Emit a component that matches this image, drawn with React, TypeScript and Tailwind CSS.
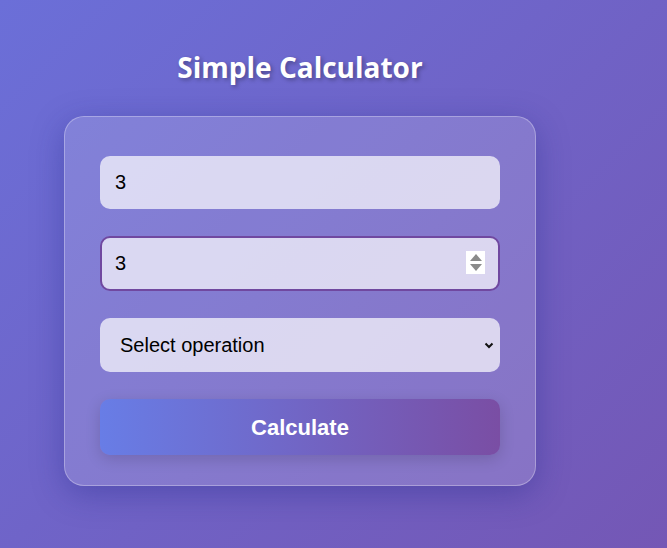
import { useState } from "react"

const App = () => {
  const [a, setA] = useState("3")
  const [b, setB] = useState("3")
  const [op, setOp] = useState("")

  return (
    <div className="min-h-screen w-full bg-[linear-gradient(135deg,#6b6fd8_0%,#7457b5_100%)] font-['Liberation_Sans',Arial,sans-serif]">
      <div className="w-[600px] flex flex-col items-center pt-[47px]">
        <h1 className="text-[28px] leading-[40px] font-bold text-white font-['Open_Sans',sans-serif] [text-shadow:2px_2px_4px_rgba(0,0,0,0.3)]">
          Simple Calculator
        </h1>

        <div className="mt-[29px] w-[472px] rounded-[20px] border border-white/30 bg-white/15 px-[35px] pt-[39px] pb-[30px] shadow-[0_8px_32px_rgba(31,38,135,0.37)]">
          <div className="flex flex-col gap-[27px]">
            <input
              type="text"
              value={a}
              onChange={(e) => setA(e.target.value)}
              className="h-[53px] w-full rounded-[10px] bg-white/70 px-[15px] text-[20px] text-black outline-none"
            />

            <div className="relative">
              <input
                type="text"
                value={b}
                onChange={(e) => setB(e.target.value)}
                className="h-[55px] w-full rounded-[10px] border-2 border-[#7048a0] bg-white/70 px-[13px] text-[20px] text-black outline-none"
              />
              <span className="absolute right-[15px] top-[15px] flex h-[23px] w-[19px] flex-col items-center justify-center gap-[3px] bg-white">
                <span className="h-0 w-0 border-x-[6px] border-b-[7px] border-x-transparent border-b-[#8a8a8a]" />
                <span className="h-0 w-0 border-x-[6px] border-t-[7px] border-x-transparent border-t-[#8a8a8a]" />
              </span>
            </div>

            <div className="relative">
              <select
                value={op}
                onChange={(e) => setOp(e.target.value)}
                className="h-[54px] w-full appearance-none rounded-[10px] bg-white/70 pl-[20px] text-[20px] text-black outline-none"
              >
                <option value="">Select operation</option>
                <option value="+">Add</option>
                <option value="-">Subtract</option>
                <option value="*">Multiply</option>
                <option value="/">Divide</option>
              </select>
              <svg
                className="pointer-events-none absolute right-[5px] top-[21px]"
                width="12"
                height="12"
                viewBox="0 0 12 12"
              >
                <path d="M2.5 4.5 L6 8 L9.5 4.5" fill="none" stroke="#111" strokeWidth="2" />
              </svg>
            </div>

            <button className="h-[56px] w-full cursor-pointer rounded-[10px] bg-[linear-gradient(90deg,#687de6_0%,#7a4ea4_100%)] text-[22px] font-bold text-white shadow-[0_4px_15px_rgba(0,0,0,0.15)]">
              Calculate
            </button>
          </div>
        </div>
      </div>
    </div>
  )
}

export default App
